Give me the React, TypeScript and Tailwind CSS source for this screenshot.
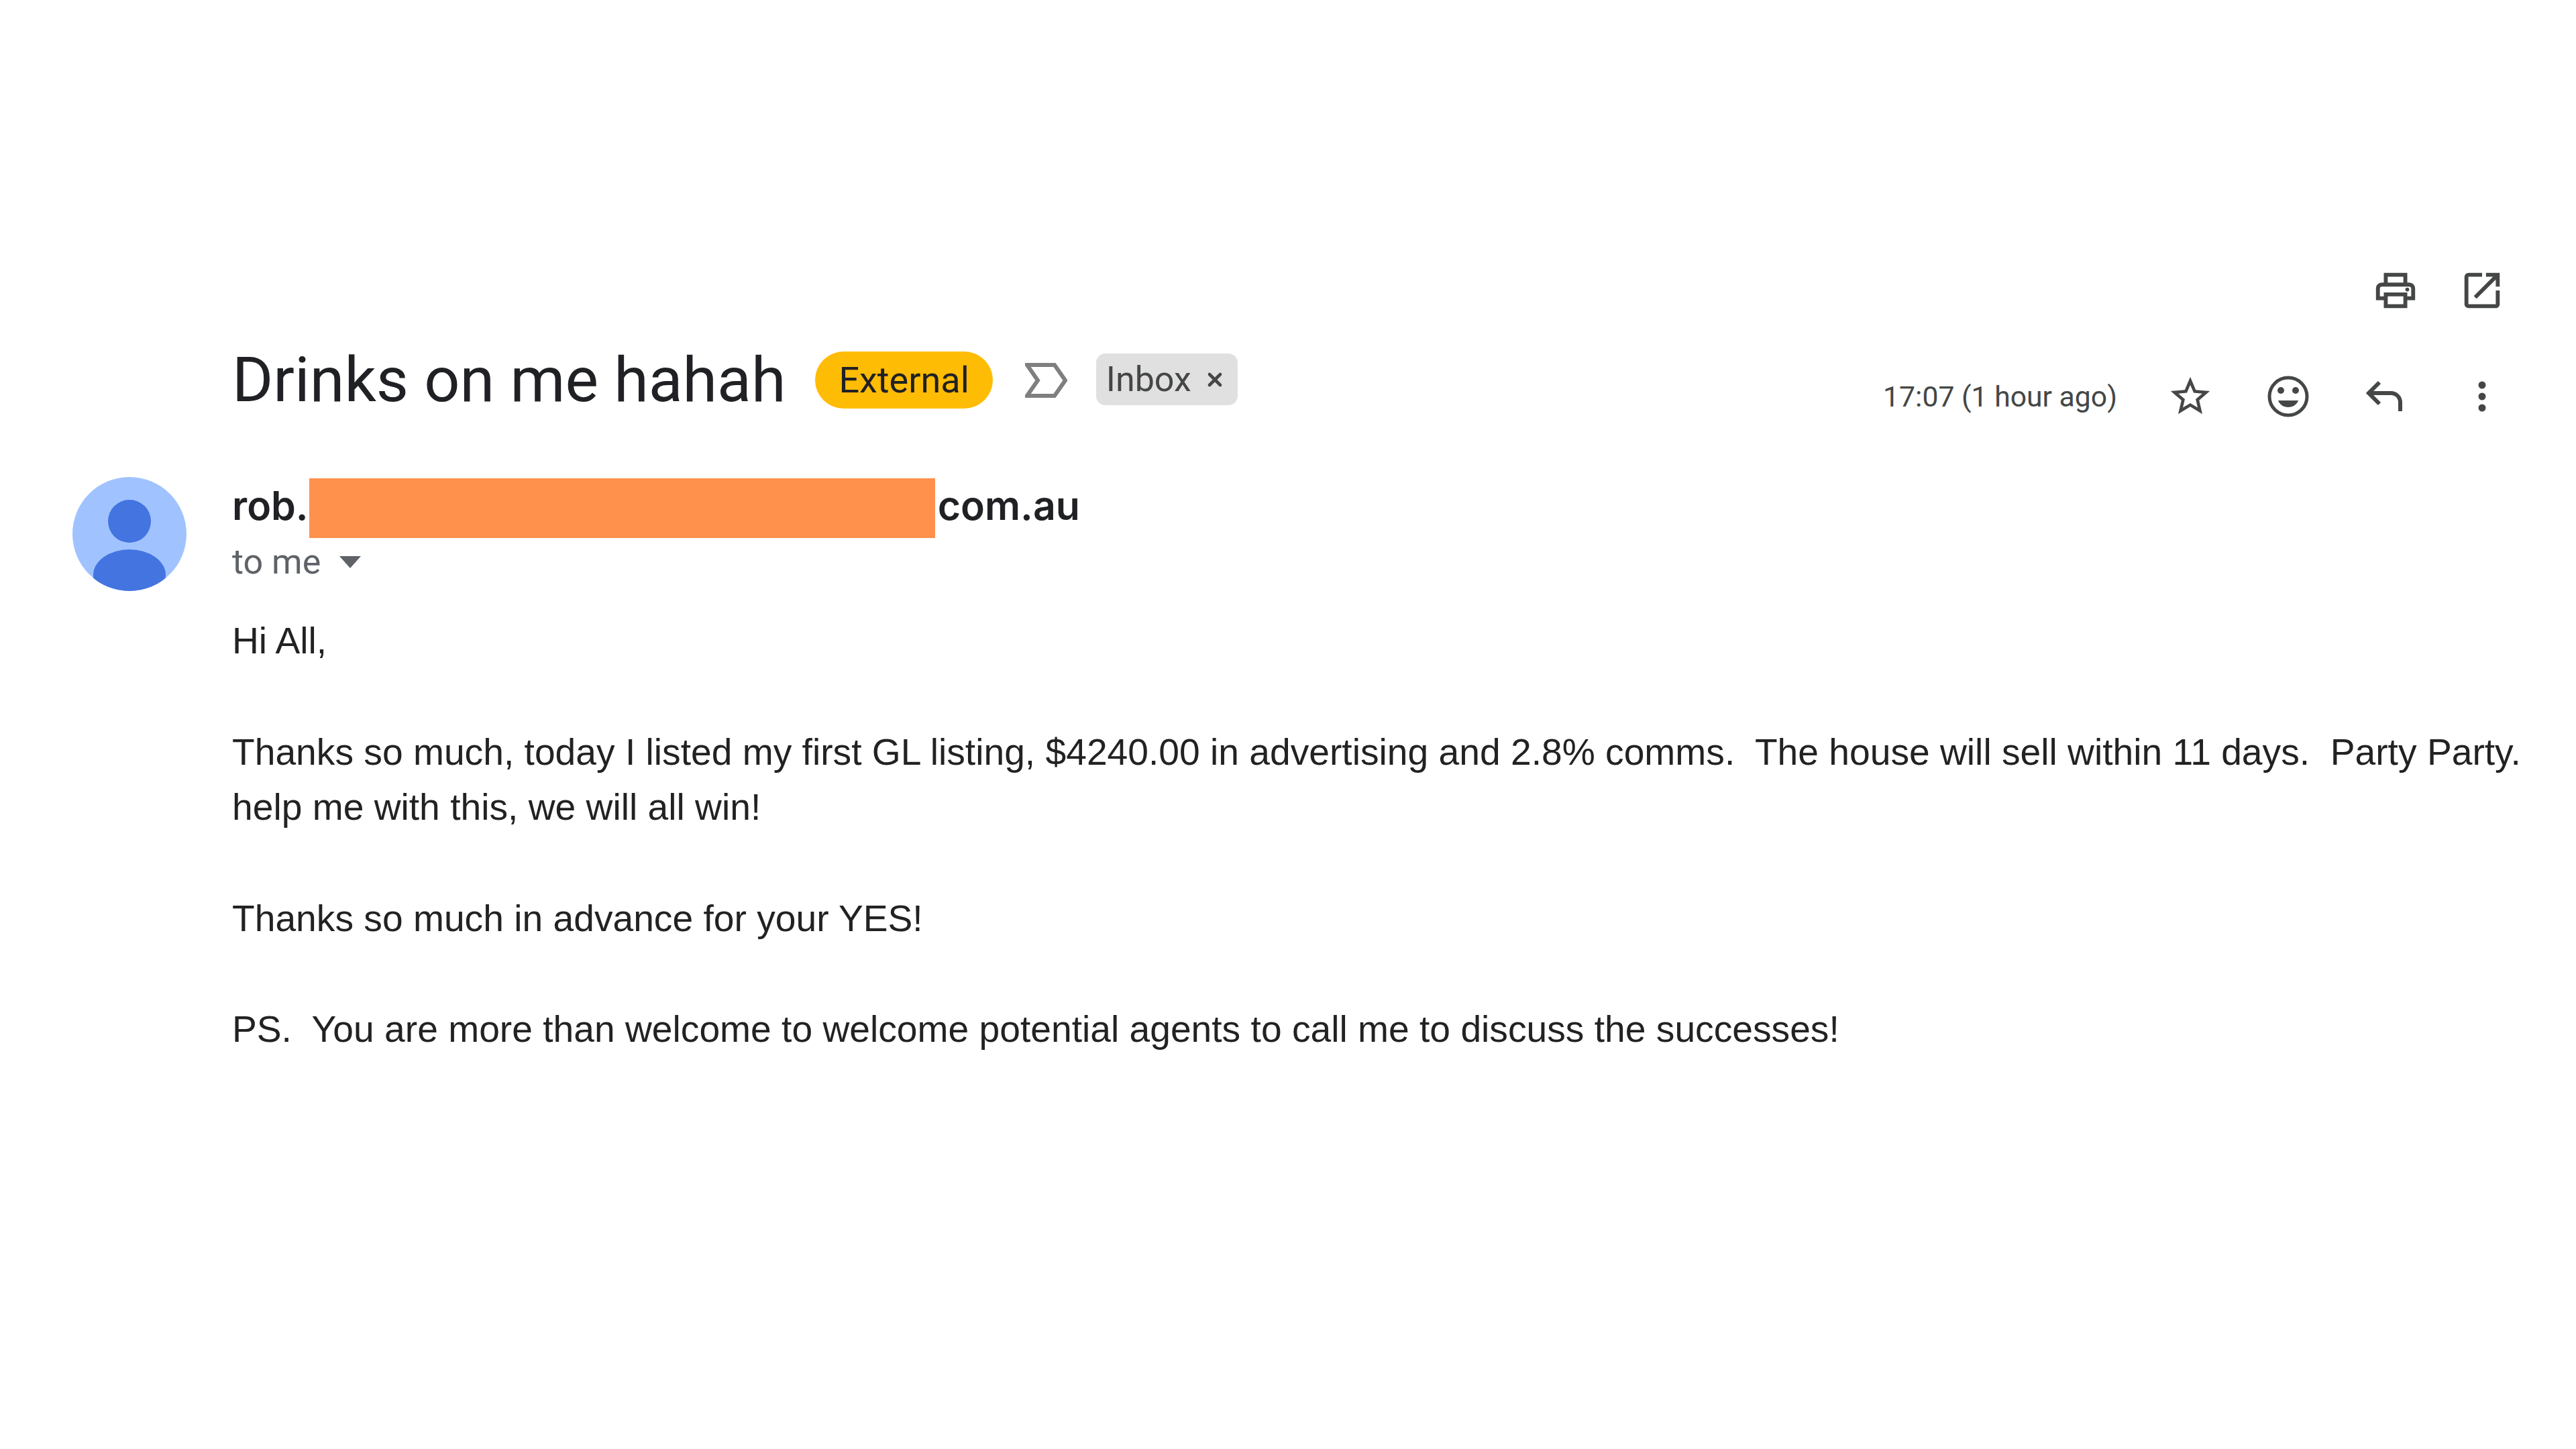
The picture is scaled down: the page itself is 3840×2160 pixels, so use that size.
import { MdOpenInNew, MdOutlinePrint, MdStarBorder } from "react-icons/md";
import { X } from "lucide-react";

export default function App() {
  return (
    <div className="h-[2160px] w-[3840px] overflow-hidden bg-white pt-[398px] font-['Roboto',sans-serif] text-[#202124]">
      {/* Print / new window */}
      <div className="flex h-[70px] justify-end gap-[59px] pr-[105px] text-[#444746]">
        <MdOutlinePrint className="h-[70px] w-[70px]" />
        <MdOpenInNew className="h-[70px] w-[70px]" />
      </div>

      {/* Subject row */}
      <div className="mt-[42px] flex h-[116px] items-start whitespace-nowrap pl-[346px] pr-[130px]">
        <h1 className="text-[93.5px] leading-[112px]">Drinks on me hahah</h1>
        <span className="ml-[44px] mt-[14px] flex h-[85px] items-center rounded-full bg-[#ffbc05] px-[35px] text-[54px]">External</span>
        <svg className="ml-[48px] mt-[31px] h-[52px] w-[63px] text-[#7f7f7f]" viewBox="0 0 63 52" fill="none" stroke="currentColor" strokeWidth="6">
          <path d="M3 3H44L60 26L44 49H3L19 26Z" />
        </svg>
        <span className="ml-[43px] mt-[17px] flex h-[77px] items-center rounded-[14px] bg-[#e0e0e0] pl-[15px] pr-[18px] text-[52px] text-[#444746]">
          Inbox
          <X className="ml-[19px] h-[32px] w-[32px]" strokeWidth={3.5} />
        </span>
        <div className="ml-auto mt-[46px] flex items-center text-[#444746]">
          <span className="text-[42.7px]">17:07 (1 hour ago)</span>
          <MdStarBorder className="ml-[74px] h-[70px] w-[70px]" />
          <svg className="ml-[76px] h-[70px] w-[70px]" viewBox="0 0 70 70" fill="none">
            <circle cx="35" cy="35" r="28" stroke="currentColor" strokeWidth="5" />
            <circle cx="24" cy="26" r="5" fill="currentColor" />
            <circle cx="46" cy="26" r="5" fill="currentColor" />
            <path d="M20 41H50C48 47 42 51 35 51C28 51 22 47 20 41Z" fill="currentColor" />
          </svg>
          <svg className="ml-[80px] h-[48px] w-[60px]" viewBox="0 0 60 48" fill="none" stroke="currentColor" strokeWidth="6">
            <path d="M21 3L5 19L21 35M5 19H38C46 19 52 25 52 33V46" />
          </svg>
          <svg className="ml-[104px] h-[48px] w-[20px]" viewBox="0 0 20 48" fill="currentColor">
            <circle cx="10" cy="7" r="5.5" />
            <circle cx="10" cy="24" r="5.5" />
            <circle cx="10" cy="41" r="5.5" />
          </svg>
        </div>
      </div>

      {/* Sender and body */}
      <div className="mt-[85px] flex pl-[108px]">
        <svg className="h-[170px] w-[170px] shrink-0" viewBox="0 0 170 170">
          <defs>
            <clipPath id="avatar-clip">
              <circle cx="85" cy="85" r="85" />
            </clipPath>
          </defs>
          <circle cx="85" cy="85" r="85" fill="#a0c3ff" />
          <circle cx="85" cy="66" r="32" fill="#4374e0" />
          <ellipse cx="85" cy="146" rx="54" ry="38" fill="#4374e0" clipPath="url(#avatar-clip)" />
        </svg>
        <div className="ml-[68px] min-w-0">
          <div className="mt-[2px] flex h-[89px] items-start font-['Inter',sans-serif] text-[59px] font-semibold leading-[82px]">
            rob.
            <span className="ml-[1px] h-[89px] w-[933px] bg-[#ff914d]" />
            <span className="ml-[4px]">com.au</span>
          </div>
          <div className="flex items-center text-[52px] leading-[72px] text-[#5f6368]">
            to me
            <span className="ml-[28px] h-0 w-0 border-x-[16px] border-t-[18px] border-x-transparent border-t-[#5f6368]" />
          </div>
          <div className="mt-[40px] whitespace-nowrap font-['Liberation_Sans',sans-serif] text-[55.2px] leading-[82.6px] text-[#222222]">
            <p>Hi All,</p>
            <p className="mt-[83px]">Thanks so much, today I listed my first GL listing, $4240.00 in advertising and 2.8% comms.&nbsp; The house will sell within 11 days.&nbsp; Party Party.</p>
            <p>help me with this, we will all win!</p>
            <p className="mt-[83px]">Thanks so much in advance for your YES!</p>
            <p className="mt-[83px]">PS.&nbsp; You are more than welcome to welcome potential agents to call me to discuss the successes!</p>
          </div>
        </div>
      </div>
    </div>
  );
}
